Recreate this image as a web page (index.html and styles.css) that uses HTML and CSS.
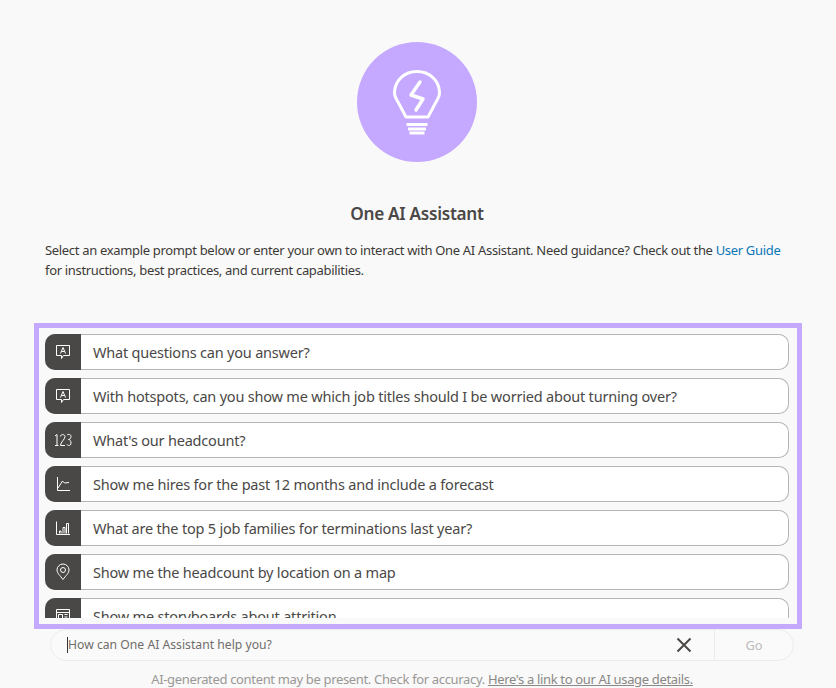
FILE: index.html
```html
<!DOCTYPE html>
<html lang="en">
<head>
<meta charset="utf-8">
<title>One AI Assistant</title>
<link rel="stylesheet" href="styles.css">
</head>
<body>
<main class="page">
  <div class="hero">
    <svg class="bulb" width="120" height="120" viewBox="0 0 120 120" fill="none" stroke="#fff" stroke-linecap="round" stroke-linejoin="round">
      <path stroke-width="3" d="M49 75H71L79 60C81.500 56 82.500 53 82.500 51C82.500 38.500 72.500 29.500 60 29.500C47.500 29.500 37.500 38.500 37.500 51C37.500 53 38.500 56 41 60Z"/>
      <path stroke-width="3.500" d="M63 40L54 53L66 57L59 68"/>
      <path stroke-width="2.800" stroke-linecap="butt" d="M49.500 82.500H70.500M51 87H69M52.500 91H67.500"/>
    </svg>
  </div>
  <h1 class="title">One AI Assistant</h1>
  <p class="intro">Select an example prompt below or enter your own to interact with One AI Assistant. Need guidance? Check out the <a class="guide" href="#">User Guide</a> for instructions, best practices, and current capabilities.</p>
  <section class="prompts">
    <div class="prompt-list">
      <div class="prompt"><span class="tag"><svg width="16" height="16" viewBox="0 0 16 16" fill="none" stroke="#fff"><path d="M1.500 1.500H14.500V11.500H8.500L6.500 14.500V11.500H1.500Z"/><path d="M5.500 9.500L8 3.500L10.500 9.500M6.500 7.500H9.500"/></svg></span><span class="label">What questions can you answer?</span></div>
      <div class="prompt"><span class="tag"><svg width="16" height="16" viewBox="0 0 16 16" fill="none" stroke="#fff"><path d="M1.500 1.500H14.500V11.500H8.500L6.500 14.500V11.500H1.500Z"/><path d="M5.500 9.500L8 3.500L10.500 9.500M6.500 7.500H9.500"/></svg></span><span class="label">With hotspots, can you show me which job titles should I be worried about turning over?</span></div>
      <div class="prompt"><span class="tag"><svg width="18" height="14" viewBox="0 0 18 14" fill="none" stroke="#fff"><path d="M1 3L3 1.500V12.500M1 12.500H4.500"/><path d="M6.500 3.500C6.500 1 11 1 11 3.500C11 6.500 6.500 9 6.500 12.500H11"/><path d="M13 2C14 1 17 1 17 3.500C17 5.500 15.500 6.500 14.500 6.500C16 6.500 17 8 17 10C17 13 14 13 13 11.500"/></svg></span><span class="label">What's our headcount?</span></div>
      <div class="prompt"><span class="tag"><svg width="16" height="16" viewBox="0 0 16 16" fill="none" stroke="#fff"><path d="M2.500 1V14.500H15"/><path d="M3 12L7.500 5L9.500 7L14 6.500"/></svg></span><span class="label">Show me hires for the past 12 months and include a forecast</span></div>
      <div class="prompt"><span class="tag"><svg width="16" height="16" viewBox="0 0 16 16" fill="none" stroke="#fff"><path d="M1.500 1.500V14.500H15"/><path d="M4.500 13.500V11H6V13.500M8 13.500V7.500H10V13.500M11.500 13.500V3.500H13.500V13.500"/></svg></span><span class="label">What are the top 5 job families for terminations last year?</span></div>
      <div class="prompt"><span class="tag"><svg width="14" height="18" viewBox="0 0 14 18" fill="none" stroke="#fff"><path d="M7 16.500C4 12.500 1 10 1 7A6 6 0 0 1 13 7C13 10 10 12.500 7 16.500Z"/><circle cx="7" cy="7" r="2.500"/></svg></span><span class="label">Show me the headcount by location on a map</span></div>
      <div class="prompt"><span class="tag"><svg width="16" height="16" viewBox="0 0 16 16" fill="none" stroke="#fff"><path d="M1.500 1.500H14.500V14.500H1.500ZM1.500 4.500H14.500M3.500 6.500H7.500V12.500H3.500ZM9.500 6.500H12.500M9.500 9H12.500M9.500 11.500H12.500"/></svg></span><span class="label">Show me storyboards about attrition</span></div>
    </div>
  </section>
  <div class="ask">
    <span class="placeholder">How can One AI Assistant help you?</span>
    <svg class="clear" width="16" height="16" viewBox="0 0 16 16" fill="none" stroke="#4a4846" stroke-width="2"><path d="M1.500 1.500L14.500 14.500M14.500 1.500L1.500 14.500"/></svg>
    <span class="go">Go</span>
  </div>
  <p class="note">AI-generated content may be present. Check for accuracy. <a class="usage" href="#">Here's a link to our AI usage details.</a></p>
</main>
</body>
</html>
```
FILE: styles.css
```css
html, body {
  margin: 0;
  height: 100%;
  overflow: hidden;
  background: #f9f9f9;
}
body {
  font-family: "Noto Sans", sans-serif;
  color: #4a4846;
}
.page {
  display: flex;
  flex-direction: column;
  height: 688px;
  box-sizing: border-box;
  padding: 42px 2px 0 0;
}
.hero {
  align-self: center;
  width: 120px;
  height: 120px;
  border-radius: 50%;
  background: #c5a8ff;
}
.bulb { display: block; }
.title {
  margin: 40px 0 0;
  height: 24px;
  line-height: 24px;
  text-align: center;
  font-size: 17.200px;
  font-weight: 600;
  letter-spacing: -0.3px;
}
.intro {
  margin: 14px 43px 0 45px;
  height: 40px;
  font-size: 13px;
  line-height: 20px;
  letter-spacing: -0.325px;
  color: #3c3a38;
}
.guide { color: #0a76b7; text-decoration: none; }
.prompts {
  margin: 43px 32px 0 34px;
  height: 306px;
  box-sizing: border-box;
  border: 5px solid #c5a8ff;
  padding: 6px 8px 6px 6px;
}
.prompt-list {
  display: flex;
  flex-direction: column;
  gap: 8px;
  height: 100%;
  overflow: hidden;
}
.prompt {
  display: flex;
  flex: none;
  height: 36px;
  box-sizing: border-box;
  border: 1px solid #b5b5b5;
  border-left: 0;
  border-radius: 10px;
  background: #fff;
}
.tag {
  display: flex;
  align-items: center;
  justify-content: center;
  flex: none;
  width: 36px;
  margin: -1px 0;
  border-radius: 10px 0 0 10px;
  background: #4a4846;
}
.label {
  padding-left: 12px;
  font-size: 14.500px;
  line-height: 35px;
  letter-spacing: -0.2px;
  white-space: nowrap;
}
.ask {
  display: flex;
  align-items: center;
  flex: none;
  height: 32px;
  margin: 0 40px 0 50px;
  box-sizing: border-box;
  border: 1px solid #ececec;
  border-radius: 16px;
  background: #fafafa;
}
.placeholder {
  flex: 1;
  margin-left: 16px;
  border-left: 1px solid #333;
  font-size: 12.200px;
  line-height: 16px;
  color: #6f6d6b;
}
.clear { margin-right: 22px; }
.go {
  width: 78px;
  height: 100%;
  border-left: 1px solid #ececec;
  text-align: center;
  font-size: 12.800px;
  line-height: 30px;
  color: #bdbbb9;
}
.note {
  margin: 9px 40px 0 50px;
  text-align: center;
  font-size: 13px;
  line-height: 18px;
  letter-spacing: -0.34px;
  color: #9a9896;
}
.usage { color: #8a8886; text-decoration: underline; }
```
